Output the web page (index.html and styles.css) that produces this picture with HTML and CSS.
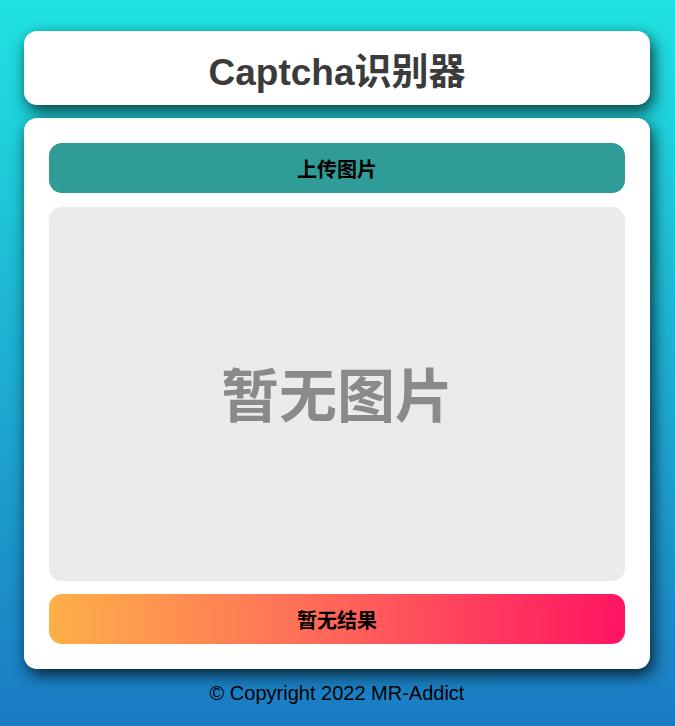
FILE: index.html
```html
<!DOCTYPE html>
<html lang="zh">
<head>
<meta charset="utf-8">
<title>Captcha识别器</title>
<link rel="stylesheet" href="styles.css">
</head>
<body>
<div class="page">
  <header class="card header">
    <h1 class="title">Captcha识别器</h1>
  </header>
  <main class="card main">
    <button class="btn upload">上传图片</button>
    <div class="preview"><span class="placeholder">暂无图片</span></div>
    <div class="btn result">暂无结果</div>
  </main>
  <footer class="footer">© Copyright 2022 MR-Addict</footer>
</div>
</body>
</html>
```
FILE: styles.css
```css
html, body {
  margin: 0;
  padding: 0;
  height: 100%;
}
body {
  background: linear-gradient(180deg, #20e3e1 0%, #1a7bc3 100%);
  font-family: "Liberation Sans", "Noto Sans CJK SC", sans-serif;
}
.page {
  padding: 31px 25px 0 24px;
  display: flex;
  flex-direction: column;
  gap: 13px;
}
.card {
  background: #fff;
  border-radius: 13px;
  box-shadow: 3px 6px 16px rgba(0, 0, 0, 0.75);
}
.header {
  height: 74px;
  display: flex;
  align-items: center;
  justify-content: center;
}
.title {
  margin: 0;
  font-size: 37px;
  font-weight: bold;
  color: #3b3b3b;
  padding-top: 1px;
}
.main {
  padding: 25px;
  display: flex;
  flex-direction: column;
  gap: 13px;
}
.btn {
  height: 50px;
  border: none;
  border-radius: 13px;
  display: flex;
  align-items: center;
  justify-content: center;
  font-family: "Liberation Sans", "Noto Sans CJK SC", sans-serif;
  font-size: 20px;
  font-weight: bold;
  color: #000;
  padding: 0;
}
.upload {
  background: #2f9c98;
  margin-bottom: 1px;
}
.preview {
  height: 374px;
  background: #ebebeb;
  border-radius: 13px;
  display: flex;
  align-items: center;
  justify-content: center;
}
.placeholder {
  font-size: 58px;
  font-weight: bold;
  color: #8a8a8a;
  filter: blur(0.6px);
  margin-top: -4px;
}
.result {
  background: linear-gradient(90deg, #fdb048 0%, #ff7557 40%, #ff1462 100%);
}
.footer {
  text-align: center;
  font-size: 20px;
  line-height: 23px;
  color: #000;
  margin-top: 0;
}
```
